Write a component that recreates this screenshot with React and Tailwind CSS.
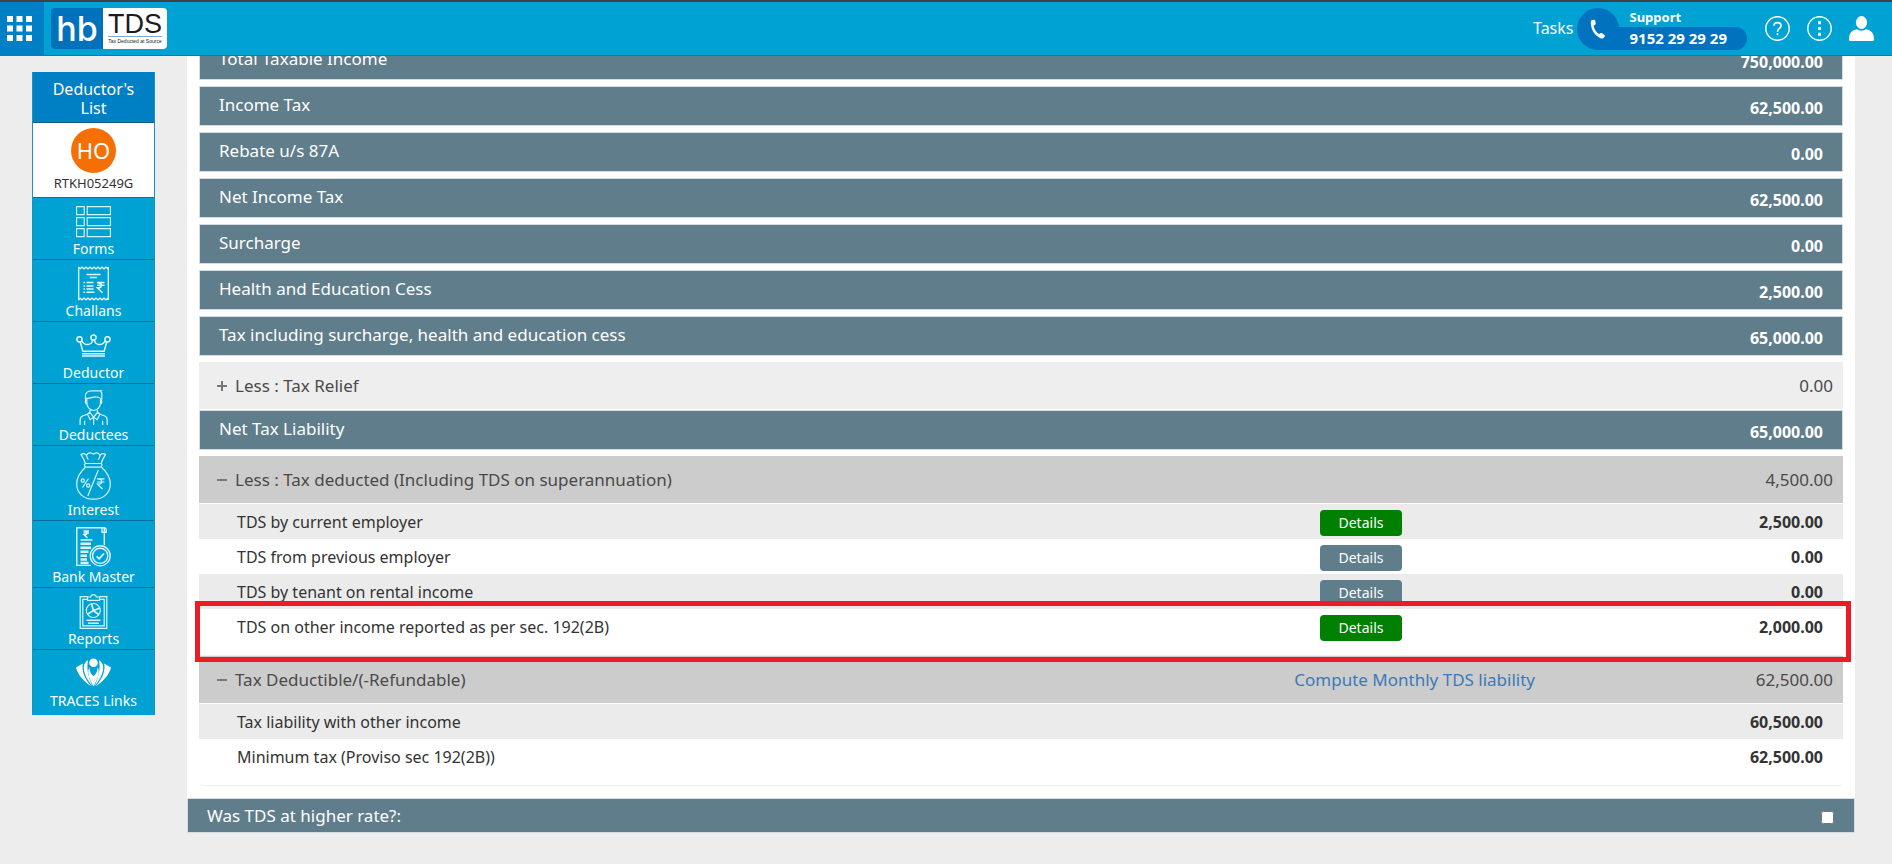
import React, { useState } from 'react';

const FormsIcon = () => (
    <svg width="35" height="35" viewBox="0 0 35 35" fill="none" stroke="#d9f5ff" strokeWidth="1.1">
        <path d="M.6 2.6h7.6v8H.6zM11.2 2.6h23.2v8H11.2zM.6 13.6h7.6v8H.6zM11.2 13.6h23.2v8H11.2zM.6 24.6h7.6v8H.6zM11.2 24.6h23.2v8H11.2z" />
    </svg>
);

const ChallansIcon = () => (
    <svg width="35" height="35" viewBox="0 0 35 35" fill="none" stroke="#e3f8ff" strokeWidth="1.3">
        <path d="M2.7 1v33M32.3 1v33" />
        <path d="M2.5 1l1.7 1.6L6 1.2l2 1.6 2-1.6 2 1.6 2-1.6 2 1.6 2-1.6 2 1.6 2-1.6 2 1.6 2-1.6 2 1.6 1.9-1.6 1.9 1.4L32.5 1" />
        <path d="M2.5 34l1.7-1.6L6 33.8l2-1.6 2 1.6 2-1.6 2 1.6 2-1.6 2 1.6 2-1.6 2 1.6 2-1.6 2 1.6 2-1.6 1.9 1.6 1.9-1.4L32.5 34" />
        <path strokeWidth="1.6" d="M10.5 8.5h14M13.8 11.5h7" />
        <path strokeWidth="1.5" d="M7.5 16.5H9M10.5 16.5h7M7.5 20H9M10.5 20h7M7.5 23H9M10.5 23h7M7.5 26.3H9M10.5 26.3h8" />
        <path strokeWidth="1.6" d="M21 16.5h7.5M21 19.3h7.5M21.5 16.6c5.5 0 5.3 5.2 0 5.2l5 5" />
    </svg>
);

const CrownIcon = () => (
    <svg width="35" height="35" viewBox="0 0 35 35" fill="none" stroke="#e3f8ff" strokeWidth="1.5">
        <circle cx="3.5" cy="11.3" r="2.6" />
        <circle cx="17.5" cy="9.5" r="2.6" />
        <circle cx="31.5" cy="11.3" r="2.6" />
        <path d="M4.2 13.8l2.6 9.4h21.4l2.6-9.4M5.7 12.8c3.6 5.9 10.2 4.2 10.9-.8M29.3 12.8c-3.6 5.9-10.2 4.2-10.9-.8" />
        <path d="M6 25.7h23M6 28h23" />
    </svg>
);

const PersonIcon = () => (
    <svg width="35" height="35" viewBox="0 0 35 35" fill="none" stroke="#d9f5ff" strokeWidth="1.2">
        <path d="M9.8 11.8L9.3 7C9 3 11.5.8 15.5.8h9.8c-.9.9-.4 1.5.5 2.2v5.6l-.6 3.2" />
        <path d="M10.8 8.3c4.2.2 5.4-1.7 9.5-1.3 2.5.2 4.2.8 4.2 2.3v3.2c0 4.600-3 8-6.8 8s-6.9-3.600-6.9-8zM10.6 10.2c-2 .2-1.6 4 .6 4M24.6 10.2c1.900.2 1.500 4-.6 4" />
        <path d="M14 19.8v2.7l3.600 4.700 3.800-4.700v-2.700M14 22l-2.500 2.200 2.600 5.500 3.500-2.500 3.600 2.500 2.700-5.500-2.500-2.200" />
        <path d="M11.5 24.2L7 25.8c-2.200.8-2.900 2.2-2.900 4.500V35M23.900 24.2l4.400 1.600c2.200.8 2.900 2.200 2.900 4.500V35M8.600 30.800V35M26.600 30.800V35M17.600 27.200V35" />
    </svg>
);

const MoneyBagIcon = () => (
    <svg width="35" height="48" viewBox="0 0 35 48" fill="none" stroke="#d9f5ff" strokeWidth="1.2">
        <path d="M9.3 11.5C8.3 7.5 6.5 5 5 2.500c2-1.300 4-1 5.500.8C12 .2 15.500.2 17.300 2.200 19.500.2 22.500.2 24 3.300c1.500-1.800 3.500-2.100 5.500-.8-1.500 2.500-3.300 5-4.300 9M10.500 3.300c.3 2 .9 3.300 1.900 4.400M24 3.300c-.3 2-.9 3.300-1.900 4.400" />
        <rect x="8.5" y="11.5" width="17.5" height="3.6" rx="1.8" />
        <path d="M9.5 15.2C4.2 20 .7 25.5.7 32c0 9.300 7 15.200 16.800 15.200S34.300 41.300 34.300 32c0-6.500-3.500-12-8.800-16.800M22.300 18L11.800 44" />
        <circle cx="6.7" cy="28.5" r="1.6" />
        <circle cx="12.2" cy="33.5" r="1.6" />
        <path d="M12.5 26.5l-6 9M21 26.8h7.5M21 30h7.5M21.5 26.800c6 0 5.600 5.400 0 5.400l5 4.800" />
    </svg>
);

const BankIcon = () => (
    <svg width="35" height="40" viewBox="0 0 35 40" fill="none" stroke="#d9f5ff" strokeWidth="1.4">
        <path d="M15 38.4H.8V.8h27.500v17.500M26 .8v4.500h4.200V2.800c0-1.300-.9-2-2-2" />
        <path d="M7.500 4h5.500M7.500 6h5.500M8 4c4 0 4 3.800 0 3.800l3.500 3.300M4.500 13h12" />
        <path strokeWidth="2.4" d="M4.500 16.800h10.500M4.500 20.800h10.500M4.500 24.800h8M4.500 28.800h6.500M4.500 32.500h6.500M4.500 36h8" />
        <circle cx="24.2" cy="28.8" r="10" fill="#00a2d4" />
        <circle cx="24.2" cy="28.8" r="7.6" />
        <path strokeWidth="1.8" d="M20.7 29.3l2.500 2.500 4.800-5.300" />
    </svg>
);

const ReportsIcon = () => (
    <svg width="35" height="35" viewBox="0 0 35 35" fill="none" stroke="#d9f5ff" strokeWidth="1.2">
        <path d="M11.500 2.700H4.200v31.700h26.600V2.700h-7.300M11.500 5.300H6.800v26.500h21.400V5.300h-4.700" />
        <path d="M11.500 6.300V3h3.200C15.300-.2 19.700-.2 20.300 3h3.200v3.300z" />
        <circle cx="17.3" cy="16.500" r="7" />
        <path strokeWidth="1.8" d="M15.500 9.800l2 7 5.500 4M17.500 16.500l-6 3.800M17.500 16.500l6.500-2.500" />
        <path strokeWidth="1.5" d="M10.500 26.200h14M12 29.200h11" />
    </svg>
);

const TracesIcon = () => (
    <svg width="35" height="35" viewBox="0 0 35 35" fill="#fff">
        <circle cx="17.5" cy="6.7" r="4.3" />
        <path d="M13.4 11.300c-2.400 4.500-1.100 9.500 4.100 19.200 5.200-9.700 6.500-14.700 4.100-19.200-.2 4-1.500 6.700-4.100 9-2.600-2.300-3.900-5-4.100-9z" />
        <path d="M12 4C4.800 8.500 7 18.500 16.500 30.500 11.800 19.500 10.500 12.500 12 4zM23 4c7.200 4.500 5 14.500-4.500 26.500C23.200 19.500 24.500 12.500 23 4z" />
        <path d="M6.800 7.500L0 11.500c2 8 8 13.800 15.300 18.800C8.500 22.500 5.500 15.500 6.800 7.500zM28.200 7.500l6.800 4c-2 8-8 13.800-15.300 18.800C26.500 22.500 29.500 15.500 28.200 7.500z" />
    </svg>
);

const menu = [
    { label: 'Forms', icon: <FormsIcon /> },
    { label: 'Challans', icon: <ChallansIcon /> },
    { label: 'Deductor', icon: <CrownIcon /> },
    { label: 'Deductees', icon: <PersonIcon /> },
    { label: 'Interest', icon: <MoneyBagIcon /> },
    { label: 'Bank Master', icon: <BankIcon /> },
    { label: 'Reports', icon: <ReportsIcon /> },
    { label: 'TRACES Links', icon: <TracesIcon /> },
];

const totals = [
    ['Total Taxable Income', '750,000.00'],
    ['Income Tax', '62,500.00'],
    ['Rebate u/s 87A', '0.00'],
    ['Net Income Tax', '62,500.00'],
    ['Surcharge', '0.00'],
    ['Health and Education Cess', '2,500.00'],
    ['Tax including surcharge, health and education cess', '65,000.00'],
];

const deducted = [
    { label: 'TDS by current employer', value: '2,500.00', details: true, filled: true },
    { label: 'TDS from previous employer', value: '0.00', details: true },
    { label: 'TDS by tenant on rental income', value: '0.00', details: true },
    { label: 'TDS on other income reported as per sec. 192(2B)', value: '2,000.00', details: true, filled: true },
];

const deductible = [
    { label: 'Tax liability with other income', value: '60,500.00' },
    { label: 'Minimum tax (Proviso sec 192(2B))', value: '62,500.00' },
];

const Header = () => (
    <header className="fixed inset-x-0 top-0 z-10 flex h-14 items-stretch justify-between border-t-2 border-b border-t-[#3f4347] border-b-[#0b7fa8] bg-[#00a2d4] text-white">
        <div className="flex items-center">
            <button aria-label="Apps" className="flex h-full w-11 items-center bg-[#0080c4] pl-[7px]">
                <svg width="25" height="25" viewBox="0 0 25 25" fill="#fff">
                    <path d="M0 0h6v6H0zM9.5 0h6v6h-6zM19 0h6v6h-6zM0 9.5h6v6H0zM9.5 9.5h6v6h-6zM19 9.5h6v6h-6zM0 19h6v6H0zM9.5 19h6v6h-6zM19 19h6v6h-6z" />
                </svg>
            </button>
            <a href="#" className="ml-[7px] flex h-[41px] overflow-hidden rounded-sm">
                <span className="flex w-[52px] items-center justify-center bg-[#0072bc] font-['Inter',sans-serif] text-[34px] leading-none font-medium">hb</span>
                <span className="flex w-16 flex-col items-center justify-center bg-white font-['Liberation_Sans',sans-serif] text-[#1c1c1c]">
                    <span className="border-b border-[#7fa8cc] text-[27px] leading-6">TDS</span>
                    <span className="text-[5px] leading-[9px] whitespace-nowrap">Tax Deducted at Source</span>
                </span>
            </a>
        </div>
        <div className="flex items-center pr-[18px]">
            <a href="#" className="mr-1 pb-0.5 text-base">Tasks</a>
            <div className="flex items-end">
                <span className="z-10 flex size-[42px] items-center justify-center rounded-full bg-[#0072c0]">
                    <svg width="16" height="20" viewBox="0 0 16 20" fill="#fff">
                        <path d="M2.200 1.100L4.100.7c.7-.1 1 .2 1.100.8l.5 3c.1.700-.1 1-.6 1.300l-1.500.9c.6 3.500 2.500 6.300 5.400 8.300l1.800-.9c.5-.3.900-.2 1.300.1l2.400 1.800c.5.400.6.900.2 1.400l-1.200 1.500c-.6.700-1.500.9-2.500.5C5.300 17.100 1.300 11.700.8 4.300.700 2.500 1.100 1.400 2.200 1.100z" />
                    </svg>
                </span>
                <div className="-ml-5 flex flex-col">
                    <span className="pl-[30px] text-[13px] leading-5 font-bold">Support</span>
                    <span className="rounded-r-full bg-[#0072c0] pr-5 pl-[30px] text-[15px] leading-[23px] font-bold">9152 29 29 29</span>
                </div>
            </div>
            <button aria-label="Help" className="ml-[18px]">
                <svg width="25" height="25" viewBox="0 0 25 25" fill="none" stroke="#fff" strokeWidth="1.4">
                    <circle cx="12.5" cy="12.5" r="11.7" />
                    <path strokeWidth="1.7" d="M9 9.8c0-4.300 7-4.300 7 0 0 2.700-3.500 2.600-3.500 6M12.500 17.200v2" />
                </svg>
            </button>
            <button aria-label="More" className="ml-[17px]">
                <svg width="25" height="25" viewBox="0 0 25 25" fill="none" stroke="#fff" strokeWidth="1.4">
                    <circle cx="12.5" cy="12.5" r="11.7" />
                    <path fill="#fff" stroke="none" d="M11 5.300h3v3h-3zM11 11h3v3h-3zM11 16.700h3v3h-3z" />
                </svg>
            </button>
            <button aria-label="Account" className="ml-[17px]">
                <svg width="25" height="25" viewBox="0 0 25 25" fill="#fff">
                    <ellipse cx="12.5" cy="6.5" rx="5.6" ry="6.5" />
                    <path d="M0 23.500c0-6 2-9 8-10.300 2.600 1.900 6.400 1.900 9 0 6 1.300 8 4.300 8 10.300 0 1-.5 1.500-1.500 1.500h-22C.5 25 0 24.500 0 23.500z" />
                </svg>
            </button>
        </div>
    </header>
);

const Sidebar = () => (
    <nav className="mt-[72px] ml-8 w-[123px] shrink-0 self-start border-x border-[#1a93c0] bg-[#00a2d4] text-center text-sm text-white">
        <a href="#" className="block border-b border-[#0b5f86] bg-[#0080c4] px-3 pt-2 pb-1 text-base leading-[19px]">Deductor's List</a>
        <a href="#" className="flex flex-col items-center border-b border-[#0b6f98] bg-white pt-[5px] pb-1">
            <span className="flex size-[45px] items-center justify-center rounded-full bg-[#f56f05] text-[22px]">HO</span>
            <span className="text-[13px] leading-5 text-[#333]">RTKH05249G</span>
        </a>
        {menu.map((item) => (
            <a key={item.label} href="#" className="flex flex-col items-center border-b border-[#0b6f98] pt-[6px] leading-5 last:border-0 last:pb-1">
                {item.icon}
                {item.label}
            </a>
        ))}
    </nav>
);

const TotalBar = ({ label, value }) => (
    <div className="mb-1.5 flex h-10 items-center justify-between border border-[#d3dde2] bg-[#607d8b] px-[19px] text-white">
        <span className="pb-0.5 text-[17px] leading-6">{label}</span>
        <span className="pt-1 text-base font-bold">{value}</span>
    </div>
);

const SectionHead = ({ label, value, open, link, onClick }) => (
    <div className={`grid h-[47px] grid-cols-[2fr_1fr] items-center pr-2.5 pl-[18px] text-[17px] text-[#4a4a4a] ${open ? 'bg-[#ccc]' : 'bg-[#eee]'}`}>
        <button onClick={onClick} className="flex items-center gap-2 text-left">
            <svg width="10" height="10" viewBox="0 0 10 10" stroke="#777" strokeWidth="2">
                <path d={open ? 'M0 5h10' : 'M0 5h10M5 0v10'} />
            </svg>
            {label}
        </button>
        <div className="flex items-center justify-between">
            {link ? <a href="#" className="text-[#3c7ab5]">{link}</a> : <span />}
            <span>{value}</span>
        </div>
    </div>
);

const DetailTable = ({ rows, children }) => (
    <div className="relative mt-px rounded border-b border-[#eee] pb-[11px]">
        <table className="w-full table-fixed text-base text-[#333]">
            <tbody>
                {rows.map((row) => (
                    <tr key={row.label} className="h-[35px] odd:bg-[#ebebeb]">
                        <td className="w-2/3 pl-[38px]">{row.label}</td>
                        <td className="pt-0.5 pl-[25px]">
                            {row.details && (
                                <button className={`block h-[26px] w-[82px] rounded text-[14px] leading-none text-white ${row.filled ? 'bg-[#008000]' : 'bg-[#607d8b]'}`}>
                                    Details
                                </button>
                            )}
                        </td>
                        <td className="pr-5 text-right font-bold">{row.value}</td>
                    </tr>
                ))}
            </tbody>
        </table>
        {children}
    </div>
);

const App = () => {
    const [relief, setRelief] = useState(false);
    const [showDeducted, setShowDeducted] = useState(true);
    const [showDeductible, setShowDeductible] = useState(true);
    const [higherRate, setHigherRate] = useState(false);

    return (
        <div className="min-h-screen bg-[#ededed] font-['Noto_Sans',sans-serif]">
            <Header />
            <div className="flex">
                <Sidebar />
                <main className="mr-[37px] ml-8 grow">
                    <div className="bg-white px-3 pt-10 pb-3">
                        {totals.map(([label, value]) => (
                            <TotalBar key={label} label={label} value={value} />
                        ))}
                        <div className="mb-px">
                            <SectionHead label="Less : Tax Relief" value="0.00" open={relief} onClick={() => setRelief(!relief)} />
                        </div>
                        <TotalBar label="Net Tax Liability" value="65,000.00" />
                        <SectionHead
                            label="Less : Tax deducted (Including TDS on superannuation)"
                            value="4,500.00"
                            open={showDeducted}
                            onClick={() => setShowDeducted(!showDeducted)}
                        />
                        {showDeducted && (
                            <DetailTable rows={deducted}>
                                {/* highlights the sec. 192(2B) row */}
                                <div className="pointer-events-none absolute top-[97px] -right-2 -left-1 h-[61px] border-5 border-[#ec1c24]" />
                            </DetailTable>
                        )}
                        <SectionHead
                            label="Tax Deductible/(-Refundable)"
                            value="62,500.00"
                            link="Compute Monthly TDS liability"
                            open={showDeductible}
                            onClick={() => setShowDeductible(!showDeductible)}
                        />
                        {showDeductible && <DetailTable rows={deductible} />}
                    </div>
                    <div className="flex h-[35px] items-center justify-between border border-[#d3dde2] bg-[#607d8b] pr-5 pl-[19px] text-[17px] text-white">
                        <label htmlFor="higher-rate">Was TDS at higher rate?:</label>
                        <input
                            id="higher-rate"
                            type="checkbox"
                            className="mt-1 size-[13px]"
                            checked={higherRate}
                            onChange={(e) => setHigherRate(e.target.checked)}
                        />
                    </div>
                </main>
            </div>
        </div>
    );
};

export default App;
